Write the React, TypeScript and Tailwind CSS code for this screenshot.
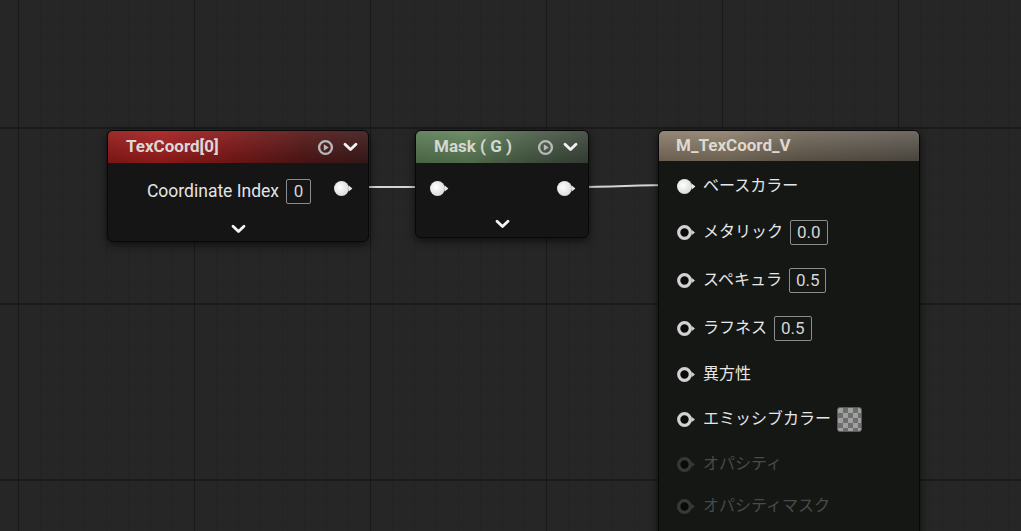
import React from "react";

const FONT = "font-['Roboto','Noto_Sans_CJK_JP',sans-serif]";

function FilledPin() {
  return (
    <svg width="21" height="17" viewBox="0 0 21 17" className="shrink-0">
      <defs>
        <radialGradient id="pf" cx="40%" cy="40%" r="70%">
          <stop offset="0%" stopColor="#ffffff" />
          <stop offset="100%" stopColor="#d6d6d6" />
        </radialGradient>
      </defs>
      <circle cx="7.5" cy="8.5" r="7.5" fill="url(#pf)" />
      <path d="M14.8 5.6 L18.4 8.5 L14.8 11.4 Z" fill="#e6e6e6" />
    </svg>
  );
}

function HollowPin({ dim = false }: { dim?: boolean }) {
  const ring = dim ? "#383838" : "#d2d2d2";
  const tri = dim ? "#383838" : "#cfcfcf";
  return (
    <svg width="21" height="17" viewBox="0 0 21 17" className="shrink-0">
      <circle cx="7.5" cy="8.5" r="5.8" fill="#0a0a0a" stroke={ring} strokeWidth="3.2" />
      <path d="M14.6 5.7 L18 8.5 L14.6 11.3 Z" fill={tri} />
    </svg>
  );
}

function PlayCircle() {
  return (
    <svg width="17" height="17" viewBox="0 0 17 17">
      <circle cx="8.5" cy="8.5" r="6.4" fill="none" stroke="#b8b8b8" strokeWidth="2.4" />
      <path d="M6.8 5.2 L11.8 8.5 L6.8 11.8 Z" fill="#b8b8b8" />
    </svg>
  );
}

function Chevron({ color = "#f2f2f2" }: { color?: string }) {
  return (
    <svg width="17" height="12" viewBox="0 0 17 12">
      <path d="M3 3.2 L8.5 8.6 L14 3.2" fill="none" stroke={color} strokeWidth="2.8" strokeLinecap="round" strokeLinejoin="round" />
    </svg>
  );
}

function ValueBox({ v }: { v: string }) {
  return (
    <div className="h-[25px] min-w-[25px] px-[6px] flex items-center justify-center border border-[#8c8c8c] rounded-[2px] text-[17px] leading-none text-[#d6d6d6]">
      {v}
    </div>
  );
}

function Checker() {
  return (
    <div className="w-[25px] h-[25px] rounded-[3px] border border-[#5a5a5a] bg-[#a0a0a0] bg-[linear-gradient(45deg,#6e6e6e_25%,transparent_25%,transparent_75%,#6e6e6e_75%),linear-gradient(45deg,#6e6e6e_25%,transparent_25%,transparent_75%,#6e6e6e_75%)] bg-[size:10px_10px,10px_10px] bg-[position:0_0,5px_5px]" />
  );
}

type Row = { label: string; h: string; box?: string; checker?: boolean; dim?: boolean; filled?: boolean };

const rows: Row[] = [
  { label: "ベースカラー", h: "h-[46px]", filled: true },
  { label: "メタリック", h: "h-[46px]", box: "0.0" },
  { label: "スペキュラ", h: "h-[50px]", box: "0.5" },
  { label: "ラフネス", h: "h-[46px]", box: "0.5" },
  { label: "異方性", h: "h-[46px]" },
  { label: "エミッシブカラー", h: "h-[44px]", checker: true },
  { label: "オパシティ", h: "h-[46px]", dim: true },
  { label: "オパシティマスク", h: "h-[38px]", dim: true },
];

export default function App() {
  return (
    <div className={`relative w-[1021px] h-[531px] overflow-hidden bg-[#262626] ${FONT}`}>
      {/* grid */}
      <div className="absolute inset-0 bg-[linear-gradient(to_right,#1a1a1a_1px,transparent_1px),linear-gradient(to_bottom,#1b1b1b_2px,transparent_2px),linear-gradient(to_right,#232323_1px,transparent_1px),linear-gradient(to_bottom,#242424_1px,transparent_1px)] bg-[size:176px_176px,176px_176px,22px_22px,22px_22px] bg-[position:18px_127px,18px_127px,18px_127px,18px_127px]" />

      {/* wires */}
      <svg className="absolute inset-0" width="1021" height="531">
        <path d="M352 187 L432 187" stroke="#d4d4d4" strokeWidth="2" fill="none" />
        <path d="M572 187 C 620 187, 630 185, 678 185" stroke="#d4d4d4" strokeWidth="2" fill="none" />
      </svg>

      {/* TexCoord node */}
      <div className="absolute left-[107px] top-[130px] w-[262px] h-[112px] rounded-[6px] bg-[#141514] border border-[#080808] shadow-[0_3px_8px_rgba(0,0,0,0.6)] overflow-hidden flex flex-col">
        <div className="h-[32px] shrink-0 flex items-center pl-[18px] pr-[9px] bg-[linear-gradient(180deg,rgba(255,255,255,0.08),rgba(0,0,0,0.18)),linear-gradient(90deg,#921a1a_0%,#a51e1e_20%,#861818_45%,#561717_75%,#3e1b1b_100%)]">
          <span className="font-bold text-[17px] text-[#dcd6d6]">TexCoord[0]</span>
          <div className="ml-auto flex items-center gap-[8px]">
            <PlayCircle />
            <Chevron />
          </div>
        </div>
        <div className="h-[57px] flex items-center justify-end pr-[13px]">
          <span className="text-[17.5px] text-[#e4e4e4] mr-[7px]">Coordinate Index</span>
          <ValueBox v="0" />
          <div className="ml-[23px] -translate-y-[3px]">
            <FilledPin />
          </div>
        </div>
        <div className="h-[18px] flex items-center justify-center">
          <Chevron />
        </div>
      </div>

      {/* Mask node */}
      <div className="absolute left-[415px] top-[130px] w-[174px] h-[108px] rounded-[6px] bg-[#141514] border border-[#080808] shadow-[0_3px_8px_rgba(0,0,0,0.6)] overflow-hidden flex flex-col">
        <div className="h-[32px] shrink-0 flex items-center pl-[18px] pr-[9px] bg-[linear-gradient(180deg,rgba(255,255,255,0.08),rgba(0,0,0,0.2)),linear-gradient(90deg,#5a7c54_0%,#62835b_30%,#4c6249_65%,#3e483d_100%)]">
          <span className="font-bold text-[17px] text-[#d4d8d4]">Mask ( G )</span>
          <div className="ml-auto flex items-center gap-[8px]">
            <PlayCircle />
            <Chevron />
          </div>
        </div>
        <div className="h-[50px] flex items-center justify-between pl-[14px] pr-[10px]">
          <FilledPin />
          <FilledPin />
        </div>
        <div className="h-[22px] flex items-center justify-center">
          <Chevron />
        </div>
      </div>

      {/* Material node */}
      <div className="absolute left-[658px] top-[130px] w-[262px] h-[420px] rounded-[6px] bg-[#151715] border border-[#080808] shadow-[0_3px_8px_rgba(0,0,0,0.6)] overflow-hidden flex flex-col">
        <div className="h-[30px] shrink-0 flex items-center pl-[17px] bg-[linear-gradient(180deg,rgba(255,255,255,0.12),rgba(0,0,0,0.2)),linear-gradient(90deg,#857664_0%,#887a66_25%,#6c6254_55%,#5a544c_100%)]">
          <span className="font-bold text-[17px] text-[#ddd8d0]">M_TexCoord_V</span>
        </div>
        <div className="pt-[2px] flex flex-col">
          {rows.map((r) => (
            <div key={r.label} className={`${r.h} flex items-center pl-[18px]`}>
              {r.filled ? <FilledPin /> : <HollowPin dim={r.dim} />}
              <span className={`ml-[5px] text-[16px] ${r.dim ? "text-[#4a4a4a]" : "text-[#e6e6e6]"}`}>{r.label}</span>
              {r.box && (
                <div className="ml-[7px]">
                  <ValueBox v={r.box} />
                </div>
              )}
              {r.checker && (
                <div className="ml-[6px]">
                  <Checker />
                </div>
              )}
            </div>
          ))}
        </div>
      </div>
    </div>
  );
}
